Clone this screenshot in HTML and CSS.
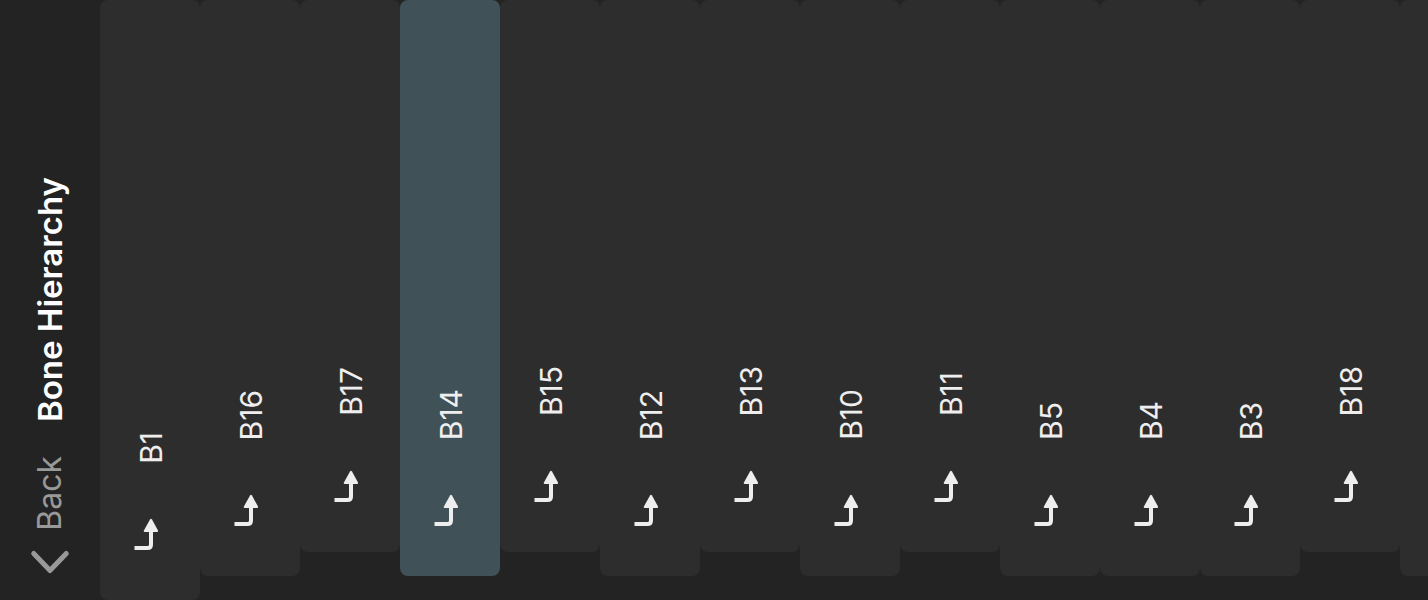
FILE: index.html
```html
<!DOCTYPE html>
<html lang="en">
<head>
<meta charset="utf-8">
<title>Bone Hierarchy</title>
<link rel="stylesheet" href="styles.css">
</head>
<body>
<svg class="defs" aria-hidden="true">
  <symbol id="arrow" viewBox="0 0 24 32">
    <path d="M0.500 30H13.500Q17 30 17 26.500V12" fill="none" stroke="currentColor" stroke-width="4"/>
    <path d="M16 1.500Q17 0.200 18 1.500L24 12.600Q24.300 14 23.300 14H10.700Q9.400 14 9.900 12.600Z" fill="currentColor"/>
  </symbol>
</svg>
<div class="app">
  <header class="bar">
    <button class="back" type="button">
      <svg class="chevron" viewBox="0 0 40 26" aria-hidden="true"><path d="M3.700 4.500L20 21.500L36.300 4.500" fill="none" stroke="currentColor" stroke-width="5" stroke-linecap="round" stroke-linejoin="round"/></svg>
      <span class="turned">Back</span>
    </button>
    <h1 class="title turned">Bone Hierarchy</h1>
  </header>
  <main class="bones">
    <button class="bone" type="button"><svg class="arrow" aria-hidden="true"><use href="#arrow"/></svg><span class="turned">B1</span></button>
    <button class="bone level-1" type="button"><svg class="arrow" aria-hidden="true"><use href="#arrow"/></svg><span class="turned">B16</span></button>
    <button class="bone level-2" type="button"><svg class="arrow" aria-hidden="true"><use href="#arrow"/></svg><span class="turned">B17</span></button>
    <button class="bone level-1 selected" type="button"><svg class="arrow" aria-hidden="true"><use href="#arrow"/></svg><span class="turned">B14</span></button>
    <button class="bone level-2" type="button"><svg class="arrow" aria-hidden="true"><use href="#arrow"/></svg><span class="turned">B15</span></button>
    <button class="bone level-1" type="button"><svg class="arrow" aria-hidden="true"><use href="#arrow"/></svg><span class="turned">B12</span></button>
    <button class="bone level-2" type="button"><svg class="arrow" aria-hidden="true"><use href="#arrow"/></svg><span class="turned">B13</span></button>
    <button class="bone level-1" type="button"><svg class="arrow" aria-hidden="true"><use href="#arrow"/></svg><span class="turned">B10</span></button>
    <button class="bone level-2" type="button"><svg class="arrow" aria-hidden="true"><use href="#arrow"/></svg><span class="turned">B11</span></button>
    <button class="bone level-1" type="button"><svg class="arrow" aria-hidden="true"><use href="#arrow"/></svg><span class="turned">B5</span></button>
    <button class="bone level-1" type="button"><svg class="arrow" aria-hidden="true"><use href="#arrow"/></svg><span class="turned">B4</span></button>
    <button class="bone level-1" type="button"><svg class="arrow" aria-hidden="true"><use href="#arrow"/></svg><span class="turned">B3</span></button>
    <button class="bone level-2" type="button"><svg class="arrow" aria-hidden="true"><use href="#arrow"/></svg><span class="turned">B18</span></button>
    <div class="bone level-1"></div>
  </main>
</div>
</body>
</html>
```
FILE: styles.css
```css
* {
  box-sizing: border-box;
}

body {
  margin: 0;
  background: #232323;
  color: #eeeeee;
  font-family: Inter, "Liberation Sans", sans-serif;
}

button {
  border: 0;
  background: none;
  color: inherit;
  font: inherit;
  cursor: pointer;
}

.defs {
  display: none;
}

.app {
  display: flex;
  height: 100vh;
  overflow: hidden;
}

/* Labels read from bottom to top */
.turned {
  writing-mode: vertical-rl;
  transform: rotate(180deg);
  white-space: nowrap;
}

.bar {
  flex: 0 0 100px;
  display: flex;
  flex-direction: column-reverse;
  align-items: center;
  gap: 34px;
  padding-bottom: 25px;
  line-height: 40px;
}

.back {
  display: flex;
  flex-direction: column-reverse;
  align-items: center;
  gap: 18px;
  padding: 0;
  color: #999999;
  font-size: 32px;
}

.chevron {
  width: 40px;
  height: 26px;
}

.title {
  margin: 0;
  color: #ffffff;
  font-size: 33px;
  font-weight: 600;
}

.bones {
  flex: 1;
  display: flex;
  min-width: 0;
  overflow: hidden;
}

.bone {
  flex: 0 0 100px;
  display: flex;
  flex-direction: column-reverse;
  align-items: center;
  gap: 54px;
  padding: 0 0 50px 2px;
  border-radius: 8px;
  background: #2d2d2d;
  font-size: 30px;
  line-height: 38px;
}

.level-1 {
  margin-bottom: 24px;
}

.level-2 {
  margin-bottom: 48px;
}

.selected {
  background: #405257;
}

.arrow {
  width: 24px;
  height: 32px;
  margin-right: 10px;
}
```
